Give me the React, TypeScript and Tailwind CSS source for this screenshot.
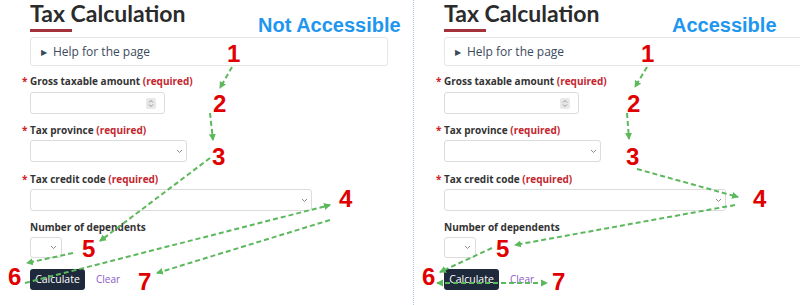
import React from 'react'

type Arrow = { x1: number; y1: number; x2: number; y2: number; both?: boolean }
type Num = { n: string; x: number; y: number }

const NUMS: Num[] = [
  { n: '1', x: 227, y: 42 },
  { n: '2', x: 213, y: 92 },
  { n: '3', x: 212, y: 145 },
  { n: '4', x: 339, y: 187 },
  { n: '5', x: 82, y: 237 },
  { n: '6', x: 8, y: 265 },
  { n: '7', x: 138, y: 270 },
]

const LEFT_ARROWS: Arrow[] = [
  { x1: 232, y1: 67, x2: 220, y2: 88 },
  { x1: 210, y1: 113, x2: 213, y2: 140 },
  { x1: 210, y1: 158, x2: 100, y2: 241 },
  { x1: 73, y1: 253, x2: 27, y2: 263 },
  { x1: 25, y1: 283, x2: 330, y2: 205 },
  { x1: 330, y1: 220, x2: 157, y2: 273 },
]

const RIGHT_ARROWS: Arrow[] = [
  { x1: 233, y1: 67, x2: 221, y2: 87 },
  { x1: 213, y1: 113, x2: 215, y2: 139 },
  { x1: 223, y1: 169, x2: 324, y2: 197 },
  { x1: 321, y1: 205, x2: 101, y2: 245 },
  { x1: 78, y1: 248, x2: 26, y2: 272 },
  { x1: 23, y1: 283, x2: 133, y2: 283, both: true },
]

function Chevron() {
  return (
    <svg width="7" height="5" viewBox="0 0 7 5" className="shrink-0">
      <path d="M1 1l2.5 2.5L6 1" fill="none" stroke="#8a8a8a" strokeWidth="1" />
    </svg>
  )
}

function Spinner() {
  return (
    <div className="flex h-[11px] w-[10px] items-center justify-center rounded-[2px] bg-[#e8e8e8]">
      <svg width="6" height="9" viewBox="0 0 6 9">
        <path d="M1 3.5L3 1.5L5 3.5M1 5.5L3 7.5L5 5.5" fill="none" stroke="#8a8a8a" strokeWidth="0.9" />
      </svg>
    </div>
  )
}

function Label({ text, required }: { text: string; required?: boolean }) {
  return (
    <div className="relative h-[14px] text-[10px] leading-[14px] font-bold text-[#333]">
      {required ? <span className="absolute -left-[8px] top-0 text-[#d0222a]">*</span> : null}
      {text}
      {required ? <span className="text-[#c4262e]"> (required)</span> : null}
    </div>
  )
}

function Annotations({ arrows, id }: { arrows: Arrow[]; id: string }) {
  return (
    <>
      <svg className="pointer-events-none absolute left-0 top-0" width="413" height="305">
        <defs>
          <marker id={`head-${id}`} markerWidth="8" markerHeight="8" refX="6" refY="4" orient="auto-start-reverse" markerUnits="userSpaceOnUse">
            <path d="M0 0.5L7 4L0 7.5z" fill="#5cb85c" />
          </marker>
        </defs>
        {arrows.map((a, i) => (
          <line
            key={i}
            x1={a.x1}
            y1={a.y1}
            x2={a.x2}
            y2={a.y2}
            stroke="#5cb85c"
            strokeWidth="2"
            strokeDasharray="5 3"
            markerEnd={`url(#head-${id})`}
            markerStart={a.both ? `url(#head-${id})` : undefined}
          />
        ))}
      </svg>
      {NUMS.map((n) => (
        <span
          key={n.n}
          className="absolute font-['Liberation_Sans',Arial,sans-serif] text-[24px] leading-none font-bold text-[#e00000]"
          style={{ left: n.x, top: n.y }}
        >
          {n.n}
        </span>
      ))}
    </>
  )
}

function Panel({ tag, arrows, id }: { tag: string; arrows: Arrow[]; id: string }) {
  return (
    <div className="relative h-[305px] w-[413px] shrink-0 pl-[30px] font-['Open_Sans','Noto_Sans',sans-serif]">
      <div className="w-[358px]">
        <h1 className="font-['Lato',sans-serif] text-[23px] leading-[27px] font-bold text-[#2b2b2b]">Tax Calculation</h1>
        <div className="mt-[2px] h-[3px] w-[42px] bg-[#a3323a]" />
        <div className="mt-[5px] flex h-[29px] items-center gap-[6px] rounded-[3px] border border-[#e6e6e6] pl-[10px] text-[12px] text-[#3b4a5c]">
          <span className="text-[8px]">▶</span>
          <span>Help for the page</span>
        </div>

        <div className="mt-[8px] flex flex-col">
          <Label text="Gross taxable amount" required />
          <div className="mt-[4px] flex h-[22px] w-[135px] items-center justify-end rounded-[3px] border border-[#dcdcdc] pr-[8px]">
            <Spinner />
          </div>

          <div className="mt-[9px]">
            <Label text="Tax province" required />
          </div>
          <div className="mt-[3px] flex h-[22px] w-[157px] items-center justify-end rounded-[3px] border border-[#dcdcdc] pr-[3px]">
            <Chevron />
          </div>

          <div className="mt-[10px]">
            <Label text="Tax credit code" required />
          </div>
          <div className="mt-[3px] flex h-[22px] w-[282px] items-center justify-end rounded-[3px] border border-[#dcdcdc] pr-[3px]">
            <Chevron />
          </div>

          <div className="mt-[9px]">
            <Label text="Number of dependents" />
          </div>
          <div className="mt-[3px] flex h-[21px] w-[32px] items-center justify-end rounded-[3px] border border-[#dcdcdc] pr-[4px]">
            <Chevron />
          </div>

          <div className="mt-[11px] flex items-center gap-[11px]">
            <button
              type="button"
              className="h-[21px] w-[55px] rounded-[3px] bg-[#1e2a3b] text-[10.5px] leading-none text-white"
            >
              Calculate
            </button>
            <span className="text-[10px] text-[#8a5ac4]">Clear</span>
          </div>
        </div>
      </div>

      <span
        className="absolute left-[258px] top-[15px] font-['Liberation_Sans',Arial,sans-serif] text-[20px] leading-none font-bold whitespace-nowrap text-[#2196ee]"
      >
        {tag}
      </span>
      <Annotations arrows={arrows} id={id} />
    </div>
  )
}

export default function App() {
  return (
    <div className="flex h-[305px] w-[800px] overflow-hidden bg-white">
      <Panel tag="Not Accessible" arrows={LEFT_ARROWS} id="l" />
      <div className="w-px shrink-0 border-l border-dotted border-[#b3c6dc]" />
      <Panel tag="Accessible" arrows={RIGHT_ARROWS} id="r" />
    </div>
  )
}
